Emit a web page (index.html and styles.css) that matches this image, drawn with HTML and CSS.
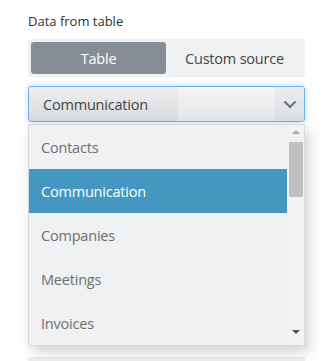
FILE: index.html
```html
<!DOCTYPE html>
<html>
<head>
<meta charset="utf-8">
<link rel="stylesheet" href="styles.css">
</head>
<body>
<div class="panel">
  <div class="label">Data from table</div>
  <div class="seg">
    <div class="seg-btn active">Table</div>
    <div class="seg-btn">Custom source</div>
  </div>
  <div class="select">
    <div class="select-value">Communication</div>
    <div class="select-gloss"></div>
    <div class="select-arrow">
      <svg width="14" height="9" viewBox="0 0 14 9"><path d="M1.5 1.5 L7 7 L12.5 1.5" fill="none" stroke="#6d6f72" stroke-width="2"/></svg>
    </div>
  </div>
  <div class="dropwrap">
    <div class="list">
      <div class="items">
        <div class="item">Contacts</div>
        <div class="item sel">Communication</div>
        <div class="item">Companies</div>
        <div class="item">Meetings</div>
        <div class="item">Invoices</div>
      </div>
      <div class="scroll">
        <div class="arr up"></div>
        <div class="thumb"></div>
        <div class="spacer"></div>
        <div class="arr down"></div>
      </div>
    </div>
    <div class="under"></div>
  </div>
</div>
</body>
</html>
```
FILE: styles.css
```css
* { box-sizing: border-box; }
html, body { margin: 0; padding: 0; background: #fff; }
body { font-family: "Open Sans", "Noto Sans", sans-serif; }
.panel { padding: 12px 21px 0 28px; width: 326px; }
.label { font-size: 13px; color: #2f2f2f; line-height: 18px; height: 27px; }
.seg { display: flex; background: #f0f1f3; padding: 3px; border-radius: 3px; height: 38px; }
.seg-btn { flex: 1; display: flex; align-items: center; justify-content: center; font-size: 14.5px; letter-spacing: -0.2px; color: #444; border-radius: 3px; }
.seg-btn.active { background: #878d94; color: #fff; flex: 0 0 135px; }
.seg-btn:not(.active) { padding-left: 1px; }
.select { margin-top: 9px; height: 36px; border: 1px solid #6cb2ec; border-radius: 3px; display: flex; box-shadow: 0 0 6px rgba(80,160,230,0.35); background: linear-gradient(#eff0f1, #d7d9dc); overflow: hidden; }
.select-value { width: 149px; display: flex; align-items: center; padding-left: 14px; font-size: 14.5px; letter-spacing: -0.2px; color: #444; }
.select-gloss { width: 97px; background: linear-gradient(#f3f4f5, #e3e5e7); }
.select-arrow { flex: 1; display: flex; align-items: center; justify-content: center; background: linear-gradient(#eaecee, #dcdfe2); padding-top: 1px; }
.dropwrap { position: relative; margin-top: 2px; }
.list { display: flex; height: 222px; border: 1px solid #d6dbde; background: #f0f1f3; box-shadow: 4px 6px 12px rgba(0,0,0,0.18); position: relative; z-index: 1; }
.items { width: 258px; }
.item { height: 44px; display: flex; align-items: center; padding-left: 12px; font-size: 14.5px; letter-spacing: -0.2px; color: #6e6e6e; }
.item.sel { background: #4397c1; color: #fff; }
.scroll { flex: 1; background: #f1f2f3; display: flex; flex-direction: column; align-items: center; padding: 5px 0 3px; }
.arr { width: 0; height: 0; border-left: 4px solid transparent; border-right: 4px solid transparent; }
.arr.up { border-bottom: 4px solid #a3a3a3; margin-bottom: 8px; }
.arr.down { border-top: 4px solid #505050; margin-bottom: 8px; }
.thumb { width: 14px; height: 55px; background: #c1c1c1; }
.spacer { flex: 1; }
.under { height: 10px; margin-top: 11px; background: #eceef0; }
```
